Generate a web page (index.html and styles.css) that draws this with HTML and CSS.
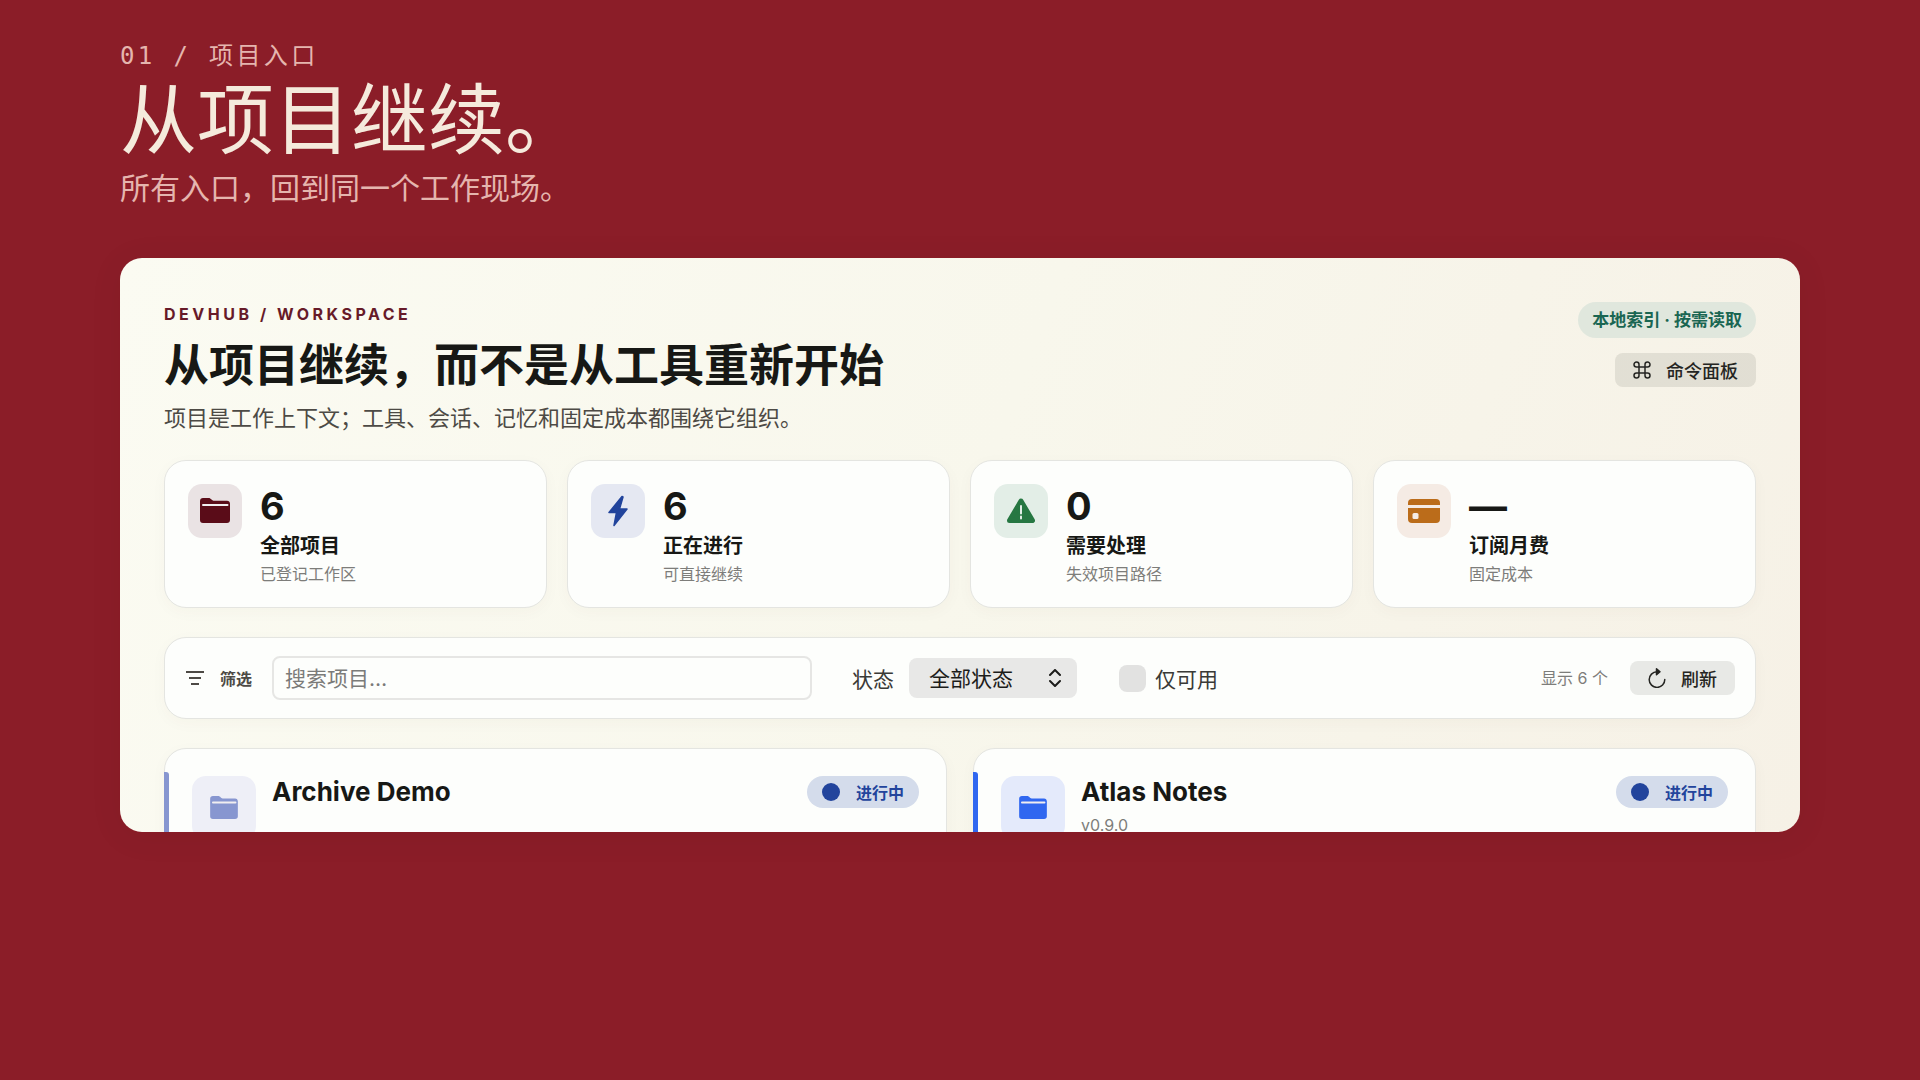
FILE: index.html
```
<!DOCTYPE html>
<html lang="zh-CN">

<head>
	<meta charset="utf-8">
	<meta name="viewport" content="width=device-width, initial-scale=1">
	<title>从项目继续。</title>
	<link rel="stylesheet" href="styles.css">
</head>

<body>

	<!-- shared icon shapes -->
	<svg class="sprite" aria-hidden="true">
		<symbol id="icon-folder" viewBox="0 0 30 26">
			<path d="M3 0h5.500c1.500 0 2 .6 3 1.500s1.500 1.200 3 1.200H27c1.800 0 3 1.200 3 3V22c0 2-1.200 3-3 3H3c-2 0-3-1-3-3V3c0-2 1.200-3 3-3z" fill="currentColor" />
			<path d="M3 7h24.500" class="slit" />
		</symbol>
	</svg>

	<main class="slide">
		<header class="slide-head">
			<p class="kicker">01 / 项目入口</p>
			<h1>从项目继续。</h1>
			<p class="lead">所有入口，回到同一个工作现场。</p>
		</header>

		<section class="panel">
			<div class="panel-head">
				<div>
					<p class="eyebrow">DEVHUB / WORKSPACE</p>
					<h2>从项目继续，而不是从工具重新开始</h2>
					<p class="summary">项目是工作上下文；工具、会话、记忆和固定成本都围绕它组织。</p>
				</div>
				<div class="panel-actions">
					<span class="index-badge">本地索引 · 按需读取</span>
					<button type="button" class="btn">
						<svg width="18" height="18" viewBox="0 0 18 18" fill="none" stroke="currentColor" stroke-width="1.500">
							<path d="M6 6V3.500A2.500 2.500 0 1 0 3.500 6h11A2.500 2.500 0 1 0 12 3.500v11a2.500 2.500 0 1 0 2.500-2.500h-11A2.500 2.500 0 1 0 6 14.500z" />
						</svg>
						命令面板
					</button>
				</div>
			</div>

			<div class="stats">
				<article class="card stat">
					<span class="stat-icon maroon">
						<svg width="30" height="26"><use href="#icon-folder" /></svg>
					</span>
					<div>
						<p class="stat-value">6</p>
						<p class="stat-label">全部项目</p>
						<p class="stat-note">已登记工作区</p>
					</div>
				</article>
				<article class="card stat">
					<span class="stat-icon blue">
						<svg width="20" height="32" viewBox="0 0 20 32">
							<path d="M14 1.500 1 17.500h7.500L6 30.500 19 14h-7.500L15 2z" fill="currentColor" stroke="currentColor" stroke-width="1.500" stroke-linejoin="round" />
						</svg>
					</span>
					<div>
						<p class="stat-value">6</p>
						<p class="stat-label">正在进行</p>
						<p class="stat-note">可直接继续</p>
					</div>
				</article>
				<article class="card stat">
					<span class="stat-icon green">
						<svg width="28" height="26" viewBox="0 0 28 26">
							<path d="M14 3 25.500 22.500h-23z" fill="currentColor" stroke="currentColor" stroke-width="5" stroke-linejoin="round" />
							<path d="M14 8v7.500M14 18.500v2" fill="none" stroke="#e3eee7" stroke-width="2" stroke-linecap="round" />
						</svg>
					</span>
					<div>
						<p class="stat-value">0</p>
						<p class="stat-label">需要处理</p>
						<p class="stat-note">失效项目路径</p>
					</div>
				</article>
				<article class="card stat">
					<span class="stat-icon orange">
						<svg width="32" height="24" viewBox="0 0 32 24">
							<rect width="32" height="24" rx="4" fill="currentColor" />
							<path d="M0 7.500h32" stroke="#f5ebe4" stroke-width="3" />
							<rect x="4.500" y="14" width="6" height="6" rx="1.500" fill="#f5ebe4" />
						</svg>
					</span>
					<div>
						<p class="stat-value">—</p>
						<p class="stat-label">订阅月费</p>
						<p class="stat-note">固定成本</p>
					</div>
				</article>
			</div>

			<form class="card toolbar">
				<label class="filter-label" for="search">
					<svg width="18" height="16" viewBox="0 0 18 16" fill="none" stroke="currentColor" stroke-width="2">
						<path d="M0 2h18M3 8h12M5 14h8" />
					</svg>
					筛选
				</label>
				<input type="text" id="search" class="search" placeholder="搜索项目…">
				<div class="field">
					<label for="status">状态</label>
					<span class="select-wrap">
						<select id="status">
							<option>全部状态</option>
							<option>进行中</option>
						</select>
						<svg class="chevrons" width="14" height="18" viewBox="0 0 14 18" fill="none" stroke="currentColor" stroke-width="2" stroke-linecap="round" stroke-linejoin="round">
							<path d="M2 6l5-5 5 5M2 12l5 5 5-5" />
						</svg>
					</span>
				</div>
				<label class="check">
					<input type="checkbox">
					仅可用
				</label>
				<span class="count">显示 6 个</span>
				<button type="button" class="btn">
					<svg width="18" height="20" viewBox="0 0 18 20" fill="none" stroke="currentColor" stroke-width="1.500" stroke-linecap="round" stroke-linejoin="round">
						<path d="M9 3.800A7.800 7.800 0 1 0 16.800 11.500" />
						<path d="M8.500 .8l3.500 3-3.500 3z" fill="currentColor" />
					</svg>
					刷新
				</button>
			</form>

			<div class="projects">
				<article class="card project archived">
					<span class="project-icon">
						<svg width="28" height="24"><use href="#icon-folder" /></svg>
					</span>
					<div class="project-text">
						<h3>Archive Demo</h3>
					</div>
					<span class="state">进行中</span>
				</article>
				<article class="card project">
					<span class="project-icon">
						<svg width="28" height="24"><use href="#icon-folder" /></svg>
					</span>
					<div class="project-text">
						<h3>Atlas Notes</h3>
						<p>v0.9.0</p>
					</div>
					<span class="state">进行中</span>
				</article>
			</div>
		</section>
	</main>

</body>

</html>
```
FILE: styles.css
```
* {
	box-sizing: border-box;
}

body {
	margin: 0;
	min-height: 100vh;
	background-color: #8b1d28;
	color: #171815;
	font-family: Inter, "Noto Sans CJK SC", sans-serif;
	font-size: 16px;
}

h1,
h2,
h3,
p {
	margin: 0;
}

.sprite {
	position: absolute;
	width: 0;
	height: 0;
}

.slide {
	padding: 40px 120px;
}

/* headline above the panel */
.slide-head {
	height: 218px;
	color: #e5b5ae;
}

.kicker {
	font-family: "DejaVu Sans Mono", "Noto Sans CJK SC", monospace;
	font-size: 24px;
	line-height: 32px;
	letter-spacing: 0.14em;
}

.slide-head h1 {
	font-size: 77px;
	line-height: 96px;
	font-weight: 400;
	color: #f5eadc;
}

.lead {
	font-size: 30px;
	line-height: 40px;
	font-weight: 400;
}

/* app panel, the lower part is cut off */
.panel {
	aspect-ratio: 1680 / 574;
	overflow: hidden;
	padding: 44px;
	border-radius: 22px;
	background: linear-gradient(110deg, #fbfbf2, #f8f7ec 50%, #f6f1e6);
	box-shadow: 0 4px 32px rgba(60, 0, 10, 0.08);
}

.panel-head {
	display: flex;
	justify-content: space-between;
	height: 158px;
}

.eyebrow {
	font-size: 16px;
	line-height: 24px;
	font-weight: 700;
	letter-spacing: 0.22em;
	color: #671a29;
}

.panel-head h2 {
	font-size: 45px;
	line-height: 80px;
	font-weight: 700;
}

.summary {
	font-size: 22px;
	line-height: 24px;
	color: #4d4a45;
}

.panel-actions {
	display: flex;
	flex-direction: column;
	align-items: flex-end;
	gap: 15px;
}

.index-badge {
	padding: 0 14px;
	border-radius: 18px;
	background-color: #e0e7dd;
	color: #1a6652;
	font-size: 17px;
	font-weight: 700;
	line-height: 36px;
}

.btn {
	display: flex;
	align-items: center;
	gap: 15px;
	height: 34px;
	padding: 0 18px;
	border: 0;
	border-radius: 8px;
	background-color: rgba(20, 20, 10, 0.09);
	color: #252522;
	font: 500 18px Inter, "Noto Sans CJK SC", sans-serif;
}

.card {
	border: 1px solid #e4e5e1;
	border-radius: 22px;
	background-color: #fdfefc;
	box-shadow: 0 4px 16px rgba(80, 60, 20, 0.03);
}

.stats {
	display: grid;
	grid-template-columns: repeat(4, 1fr);
	gap: 20px;
	margin-bottom: 29px;
}

.stat {
	display: flex;
	gap: 18px;
	height: 148px;
	padding: 23px;
}

.stat-icon {
	display: grid;
	place-items: center;
	width: 54px;
	height: 54px;
	border-radius: 14px;
}

.maroon {
	background-color: #eae3e4;
	color: #5a0c18;
}

.blue {
	background-color: #e5e8f2;
	color: #22449c;
}

.green {
	background-color: #e3eee7;
	color: #267742;
}

.orange {
	background-color: #f5ebe4;
	color: #bb6c1a;
}

.stat-value {
	font-size: 38px;
	line-height: 44px;
	font-weight: 700;
}

.stat-label {
	font-size: 20px;
	line-height: 36px;
	font-weight: 700;
}

.stat-note,
.count {
	font-size: 16px;
	line-height: 20px;
	color: #7d7d7a;
}

/* filter row */
.toolbar {
	display: flex;
	align-items: center;
	height: 82px;
	margin-bottom: 29px;
	padding: 0 20px 0 21px;
	font-size: 21px;
	color: #3a3a37;
}

.filter-label {
	display: flex;
	align-items: center;
	gap: 16px;
	font-size: 16px;
	font-weight: 700;
	color: #4d4a45;
}

.search {
	width: 540px;
	height: 44px;
	margin: 0 40px 0 20px;
	padding: 0 11px;
	border: 2px solid #e6e6e4;
	border-radius: 8px;
	background-color: #fdfefc;
	font: 21px Inter, "Noto Sans CJK SC", sans-serif;
}

.search::placeholder {
	color: #7b7b79;
}

.field {
	display: flex;
	align-items: center;
	gap: 15px;
	margin-right: 42px;
}

.select-wrap {
	position: relative;
}

select {
	appearance: none;
	display: block;
	width: 168px;
	height: 40px;
	padding: 0 20px;
	border: 0;
	border-radius: 8px;
	background-color: #e8e8e7;
	color: #1c1c1a;
	font: 21px Inter, "Noto Sans CJK SC", sans-serif;
}

.chevrons {
	position: absolute;
	top: 11px;
	right: 15px;
	color: #1c1c1a;
	pointer-events: none;
}

.check {
	display: flex;
	align-items: center;
	gap: 9px;
}

.check input {
	appearance: none;
	width: 27px;
	height: 27px;
	margin: 0;
	border-radius: 8px;
	background-color: #e2e2e1;
}

.check input:checked {
	background-color: #22449c;
}

.count {
	margin-left: auto;
	margin-right: 22px;
}

/* project cards */
.projects {
	display: grid;
	grid-template-columns: repeat(2, 1fr);
	gap: 26px;
}

.project {
	--accent: #3067f0;
	--tint: #e4eafb;
	position: relative;
	display: flex;
	align-items: flex-start;
	gap: 16px;
	height: 200px;
	padding: 27px;
}

.archived {
	--accent: #8796d0;
	--tint: #eeeff7;
}

.project::before {
	content: "";
	position: absolute;
	top: 23px;
	bottom: 23px;
	left: -1px;
	width: 5px;
	border-radius: 0 3px 3px 0;
	background-color: var(--accent);
}

.project-icon {
	display: grid;
	place-items: center;
	width: 64px;
	height: 64px;
	border-radius: 14px;
	background-color: var(--tint);
	color: var(--accent);
}

.slit {
	stroke: #f1eef0;
	stroke-width: 2;
	stroke-linecap: round;
}

.project-text {
	flex: 1;
}

.project-text h3 {
	font-size: 26px;
	line-height: 32px;
	font-weight: 700;
}

.project-text p {
	line-height: 34px;
	color: #7d7d7a;
}

.state {
	display: flex;
	align-items: center;
	gap: 16px;
	height: 32px;
	padding: 0 15px;
	border-radius: 16px;
	background-color: #d4dceb;
	color: #22449c;
	font-weight: 700;
}

.state::before {
	content: "";
	width: 18px;
	height: 18px;
	border-radius: 50%;
	background-color: #22449c;
}
```
